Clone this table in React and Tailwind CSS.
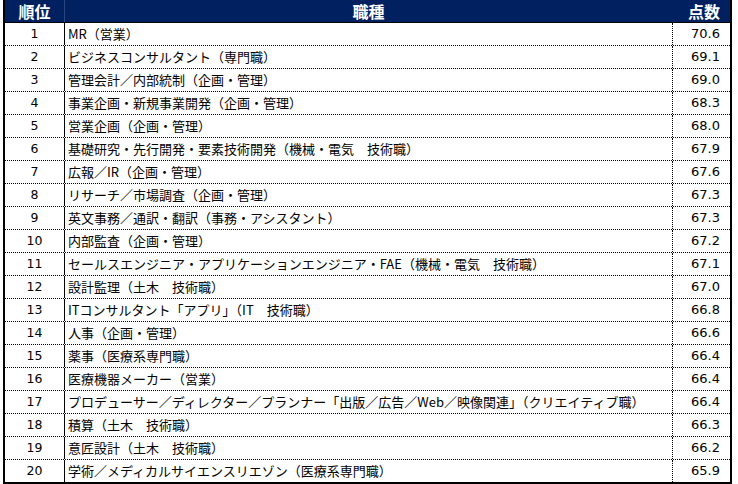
const rows = [
  [1, "MR（営業）", "70.6"],
  [2, "ビジネスコンサルタント（専門職）", "69.1"],
  [3, "管理会計／内部統制（企画・管理）", "69.0"],
  [4, "事業企画・新規事業開発（企画・管理）", "68.3"],
  [5, "営業企画（企画・管理）", "68.0"],
  [6, "基礎研究・先行開発・要素技術開発（機械・電気　技術職）", "67.9"],
  [7, "広報／IR（企画・管理）", "67.6"],
  [8, "リサーチ／市場調査（企画・管理）", "67.3"],
  [9, "英文事務／通訳・翻訳（事務・アシスタント）", "67.3"],
  [10, "内部監査（企画・管理）", "67.2"],
  [11, "セールスエンジニア・アプリケーションエンジニア・FAE（機械・電気　技術職）", "67.1"],
  [12, "設計監理（土木　技術職）", "67.0"],
  [13, "ITコンサルタント「アプリ」（IT　技術職）", "66.8"],
  [14, "人事（企画・管理）", "66.6"],
  [15, "薬事（医療系専門職）", "66.4"],
  [16, "医療機器メーカー（営業）", "66.4"],
  [17, "プロデューサー／ディレクター／プランナー「出版／広告／Web／映像関連」（クリエイティブ職）", "66.4"],
  [18, "積算（土木　技術職）", "66.3"],
  [19, "意匠設計（土木　技術職）", "66.2"],
  [20, "学術／メディカルサイエンスリエゾン（医療系専門職）", "65.9"],
];

export default function App() {
  return (
    <div className="w-[738px] h-[484px] bg-white pl-[3px] font-['Noto_Sans_CJK_JP',sans-serif] text-black">
      <div className="w-[729px] border-x-2 border-b-2 border-black">
        {/* header */}
        <div className="grid grid-cols-[60px_607px_58px] h-[23px] bg-[#002060] border-b border-black text-white font-bold text-[16px] leading-none">
          <div className="flex items-center justify-center border-r border-[#2a4580]">順位</div>
          <div className="flex items-center justify-center">職種</div>
          <div className="flex items-center justify-end pr-[10px]">点数</div>
        </div>

        {rows.map(([rank, job, score], i) => (
          <div
            key={rank}
            className={
              "grid grid-cols-[60px_607px_58px] " +
              (i < rows.length - 1 ? "h-[23px] border-b border-dotted border-black" : "h-[22px]")
            }
          >
            <div className="flex items-center justify-center border-r border-black font-['DejaVu_Sans',sans-serif] text-[12.5px]">
              {rank}
            </div>
            <div className="flex items-center pl-[3px] text-[13px] whitespace-nowrap">{job}</div>
            <div className="flex items-center justify-end pr-[10px] border-l border-dotted border-black font-['DejaVu_Sans',sans-serif] text-[13px]">
              {score}
            </div>
          </div>
        ))}
      </div>
    </div>
  );
}
